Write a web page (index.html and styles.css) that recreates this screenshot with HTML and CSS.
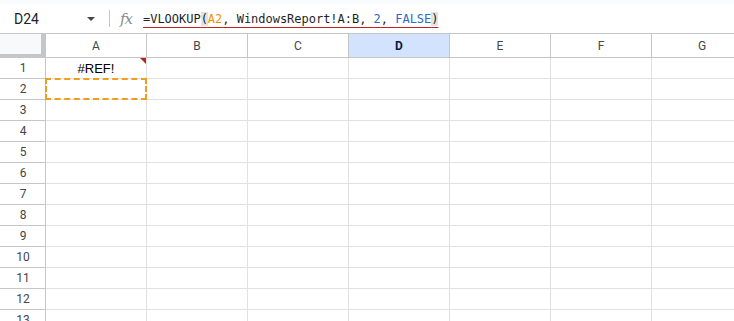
FILE: index.html
```html
<!DOCTYPE html>
<html>
<head>
<meta charset="utf-8">
<link rel="stylesheet" href="styles.css">
</head>
<body>
<div class="topstrip"></div>
<div class="fbar">
  <div class="namebox">D24</div>
  <div class="dd"></div>
  <div class="sep"></div>
  <div class="fx">fx</div>
  <div class="formula"><span class="u">=VLOOKUP<span class="par">(</span><span class="ref">A2</span>, WindowsReport!A:B, <span class="num">2</span>, <span class="num">FALSE</span><span class="par">)</span></span></div>
</div>
<div class="grid">
  <div class="corner"></div><div class="ch">A</div><div class="ch">B</div><div class="ch">C</div><div class="ch sel">D</div><div class="ch">E</div><div class="ch">F</div><div class="ch">G</div>
  <div class="rh">1</div><div class="c a1">#REF!<span class="err"></span></div><div class="c"></div><div class="c"></div><div class="c"></div><div class="c"></div><div class="c"></div><div class="c"></div>
  <div class="rh">2</div><div class="c a2"><span class="copy"></span></div><div class="c"></div><div class="c"></div><div class="c"></div><div class="c"></div><div class="c"></div><div class="c"></div>
  <div class="rh">3</div><div class="c"></div><div class="c"></div><div class="c"></div><div class="c"></div><div class="c"></div><div class="c"></div><div class="c"></div>
  <div class="rh">4</div><div class="c"></div><div class="c"></div><div class="c"></div><div class="c"></div><div class="c"></div><div class="c"></div><div class="c"></div>
  <div class="rh">5</div><div class="c"></div><div class="c"></div><div class="c"></div><div class="c"></div><div class="c"></div><div class="c"></div><div class="c"></div>
  <div class="rh">6</div><div class="c"></div><div class="c"></div><div class="c"></div><div class="c"></div><div class="c"></div><div class="c"></div><div class="c"></div>
  <div class="rh">7</div><div class="c"></div><div class="c"></div><div class="c"></div><div class="c"></div><div class="c"></div><div class="c"></div><div class="c"></div>
  <div class="rh">8</div><div class="c"></div><div class="c"></div><div class="c"></div><div class="c"></div><div class="c"></div><div class="c"></div><div class="c"></div>
  <div class="rh">9</div><div class="c"></div><div class="c"></div><div class="c"></div><div class="c"></div><div class="c"></div><div class="c"></div><div class="c"></div>
  <div class="rh">10</div><div class="c"></div><div class="c"></div><div class="c"></div><div class="c"></div><div class="c"></div><div class="c"></div><div class="c"></div>
  <div class="rh">11</div><div class="c"></div><div class="c"></div><div class="c"></div><div class="c"></div><div class="c"></div><div class="c"></div><div class="c"></div>
  <div class="rh">12</div><div class="c"></div><div class="c"></div><div class="c"></div><div class="c"></div><div class="c"></div><div class="c"></div><div class="c"></div>
  <div class="rh">13</div><div class="c"></div><div class="c"></div><div class="c"></div><div class="c"></div><div class="c"></div><div class="c"></div><div class="c"></div>
</div>
</body>
</html>
```

FILE: styles.css
```css
html, body {
  margin: 0;
  padding: 0;
  background: #ffffff;
  overflow: hidden;
  width: 734px;
  height: 321px;
}
body {
  font-family: Roboto, "Liberation Sans", Arial, sans-serif;
  color: #1f1f1f;
}
.topstrip {
  height: 4px;
  background: #f9fbfd;
}
.fbar {
  height: 29px;
  display: flex;
  align-items: center;
  background: #ffffff;
}
.namebox {
  padding-left: 14px;
  width: 73px;
  font-size: 14px;
  color: #1f1f1f;
  font-family: Roboto, "Liberation Sans", sans-serif;
}
.dd {
  width: 0;
  height: 0;
  border-left: 4px solid transparent;
  border-right: 4px solid transparent;
  border-top: 4px solid #444746;
  margin-top: 1px;
}
.sep {
  width: 1px;
  height: 17px;
  background: #c4c7c5;
  margin-left: 14px;
}
.fx {
  margin-left: 10px;
  font-family: "DejaVu Serif", "Liberation Serif", serif;
  font-style: italic;
  font-size: 15px;
  color: #8a8d91;
  letter-spacing: -1px;
  width: 23px;
}
.formula {
  font-family: "DejaVu Sans Mono", "Liberation Mono", monospace;
  font-size: 12px;
  letter-spacing: -0.02px;
  color: #1f1f1f;
  white-space: pre;
}
.u {
  text-decoration: underline;
  text-decoration-color: #c5221f;
  text-decoration-thickness: 1px;
  text-underline-offset: 4px;
}
.par {
  background: #e3e3e3;
}
.ref {
  color: #f09300;
}
.num {
  color: #2b6cc4;
}
.grid {
  display: grid;
  grid-template-columns: 46px repeat(7, 101px);
  border-top: 1px solid #c4c7c5;
}
.corner {
  height: 24px;
  box-sizing: border-box;
  background: #f8f9fa;
  border-right: 1px solid #c4c7c5;
  box-shadow: inset -4px -4px 0 #c4c7c5;
}
.ch {
  height: 24px;
  box-sizing: border-box;
  border-right: 1px solid #c4c7c5;
  border-bottom: 1px solid #c4c7c5;
  display: flex;
  align-items: center;
  justify-content: center;
  font-size: 12px;
  color: #444746;
}
.ch.sel {
  background: #d3e3fd;
  color: #0b1b3a;
  font-weight: 700;
}
.rh {
  height: 21px;
  box-sizing: border-box;
  border-right: 1px solid #c4c7c5;
  border-bottom: 1px solid #c4c7c5;
  display: flex;
  align-items: center;
  justify-content: center;
  font-size: 12px;
  color: #444746;
  padding-left: 1px;
}
.c {
  height: 21px;
  box-sizing: border-box;
  border-right: 1px solid #e1e1e1;
  border-bottom: 1px solid #e1e1e1;
  position: relative;
}
.a1 {
  display: flex;
  align-items: center;
  justify-content: center;
  font-family: "Liberation Sans", Arial, sans-serif;
  font-size: 13px;
  color: #000000;
}
.err {
  position: absolute;
  top: 0;
  right: 0;
  width: 0;
  height: 0;
  border-top: 6px solid #b3261e;
  border-left: 6px solid transparent;
}
.copy {
  position: absolute;
  left: -1px;
  top: -1px;
  right: -1px;
  bottom: -1px;
  border: 2px dashed #f29e1a;
}
```
